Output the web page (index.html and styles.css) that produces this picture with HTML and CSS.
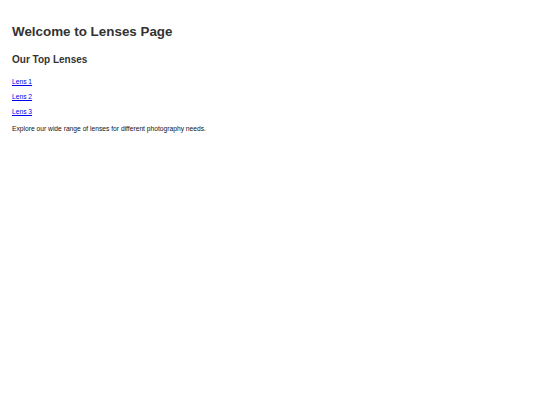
FILE: index.html
```
<!DOCTYPE html>
<html>
<head>
<meta charset="utf-8">
<link rel="stylesheet" href="styles.css">
</head>
<body class="page">
<h1 class="title">Welcome to Lenses Page</h1>
<h2 class="subtitle">Our Top Lenses</h2>
<p class="item"><a class="link" href="#">Lens 1</a></p>
<p class="item"><a class="link" href="#">Lens 2</a></p>
<p class="item"><a class="link" href="#">Lens 3</a></p>
<p class="text">Explore our wide range of lenses for different photography needs.</p>
</body>
</html>
```
FILE: styles.css
```
html { background: #fff; }
.page {
  margin: 0;
  padding: 23.5px 12px 0;
  font-family: "Liberation Sans", Arial, sans-serif;
  font-size: 6.7px;
  color: #111;
}
.title {
  font-size: 13.4px;
  line-height: 16px;
  color: #333;
  margin: 0 0 14.7px;
}
.subtitle {
  font-size: 10px;
  line-height: 12px;
  color: #333;
  margin: 0 0 11.7px;
}
.item {
  margin: 0 0 6.8px;
  line-height: 8.5px;
}
.text {
  margin: 8.2px 0 0;
  line-height: 8.5px;
}
.link { color: #0000ee; }
```
